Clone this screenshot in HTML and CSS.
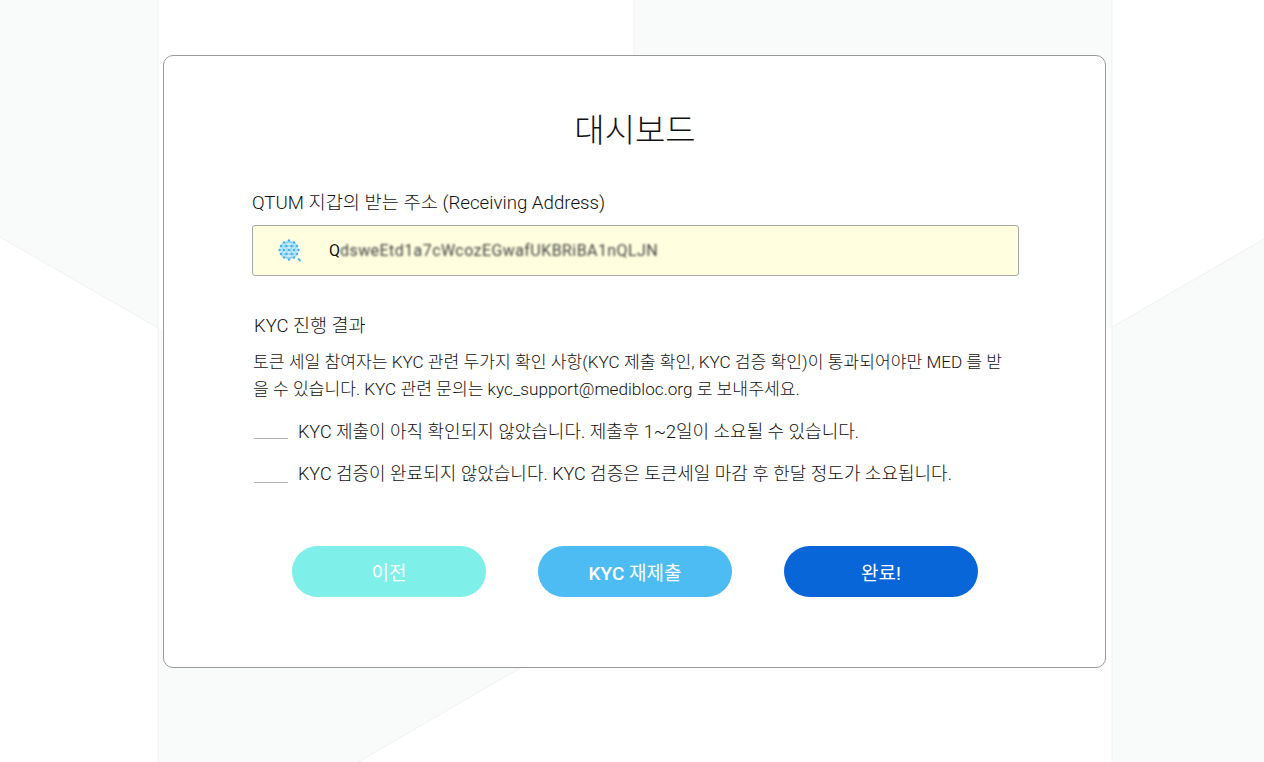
FILE: index.html
```html
<!DOCTYPE html>
<html lang="ko">
<head>
<meta charset="utf-8">
<title>대시보드</title>
<link rel="stylesheet" href="styles.css">
</head>
<body>
<svg class="backdrop" width="1264" height="762" viewBox="0 0 1264 762" aria-hidden="true">
  <rect class="tile" x="0" y="0" width="158" height="328"/>
  <rect class="tile" x="634" y="0" width="478" height="328"/>
  <path class="tile" d="M158 328 L634 602 L358 762 L158 762 Z"/>
  <path class="tile" d="M1112 327 L1264 239 L1264 762 L1112 762 Z"/>
  <path class="white" d="M0 237 L158 328 L158 340 L0 340 Z"/>
  <path class="edge" d="M0 237 L158 328"/>
  <path class="edge" d="M1264 239 L1112 327"/>
  <path class="edge" d="M522 667 L358 762"/>
  <path class="edge" d="M158 0 V762"/>
  <path class="edge" d="M1112 0 V762"/>
  <path class="edge" d="M634 0 V55"/>
</svg>
<main class="card">
  <h1 class="title">대시보드</h1>
  <label class="field-label">QTUM 지갑의 받는 주소 (Receiving Address)</label>
  <div class="address">
    <svg class="globe" width="24" height="24" viewBox="0 0 24 24" aria-hidden="true">
      <circle class="globe-fill" cx="11" cy="11" r="10"/>
      <g class="globe-net">
        <path d="M3 7 H19 M1.500 11 H20.500 M3 15 H19 M6 3.500 H16 M6 18.500 H16"/>
        <path d="M6 3.500 L3 7 L6 11 L3 15 L6 18.500 M11 1 L6 7 L11 11 L6 15 L11 21 M11 1 L16 7 L11 11 L16 15 L11 21 M16 3.500 L19 7 L16 11 L19 15 L16 18.500"/>
      </g>
      <path class="globe-dots" d="M6 3.500h0M11 1.500h0M16 3.500h0M3 7h0M8.500 7h0M13.500 7h0M19 7h0M1.500 11h0M6 11h0M11 11h0M16 11h0M20.500 11h0M3 15h0M8.500 15h0M13.500 15h0M19 15h0M6 18.500h0M11 20.500h0M16 18.500h0"/>
      <path class="globe-tail" d="M20 19.500 L22.500 22"/>
    </svg>
    <span class="address-text">Q<span class="address-blur">dsweEtd1a7cWcozEGwafUKBRiBA1nQLJN</span></span>
  </div>
  <h2 class="section-title">KYC 진행 결과</h2>
  <p class="section-text">토큰 세일 참여자는 KYC 관련 두가지 확인 사항(KYC 제출 확인, KYC 검증 확인)이 통과되어야만 MED 를 받을 수 있습니다. KYC 관련 문의는 kyc_support@medibloc.org 로 보내주세요.</p>
  <ul class="status-list">
    <li class="status"><span class="status-mark"></span>KYC 제출이 아직 확인되지 않았습니다. 제출후 1~2일이 소요될 수 있습니다.</li>
    <li class="status"><span class="status-mark"></span>KYC 검증이 완료되지 않았습니다. KYC 검증은 토큰세일 마감 후 한달 정도가 소요됩니다.</li>
  </ul>
  <div class="actions">
    <button class="btn btn-prev">이전</button>
    <button class="btn btn-resubmit"><b class="btn-strong">KYC</b> 재제출</button>
    <button class="btn btn-done">완료!</button>
  </div>
</main>
</body>
</html>
```
FILE: styles.css
```css
* { box-sizing: border-box; }
html, body { margin: 0; height: 100%; }
body {
  position: relative;
  overflow: hidden;
  background: #fff;
  color: #111;
  font-family: Roboto, "Noto Sans CJK KR", sans-serif;
  font-weight: 300;
  padding: 55px 0 0 163px;
}
.backdrop { position: absolute; left: 0; top: 0; }
.tile { fill: #f9fafa; }
.white { fill: #fff; }
.edge { fill: none; stroke: #f0f1f1; stroke-width: 1; }
.card {
  position: relative;
  width: 943px;
  height: 613px;
  background: #fff;
  border: 1px solid #9a9a9a;
  border-radius: 10px;
  padding: 52px 87px 0 88px;
}
.title {
  margin: 0 0 36px;
  height: 46px;
  line-height: 46px;
  font-size: 33px;
  font-weight: 300;
  text-align: center;
}
.field-label {
  display: block;
  height: 27px;
  line-height: 27px;
  font-size: 18.700px;
  font-weight: 300;
  margin-bottom: 8px;
}
.address {
  display: flex;
  align-items: center;
  width: 767px;
  height: 51px;
  padding-left: 25px;
  background: #ffffe0;
  border: 1px solid #a8a8a8;
  border-radius: 3px;
}
.globe { flex: none; margin-right: 27px; }
.globe-fill { fill: #c9ebfa; }
.globe-net { fill: none; stroke: #7ccbf2; stroke-width: .8; }
.globe-dots { fill: none; stroke: #45b4ec; stroke-width: 2.400; stroke-linecap: round; }
.globe-tail { stroke: #45b4ec; stroke-width: 1.800; }
.address-text { font-size: 16px; font-weight: 400; color: #111; }
.address-blur { filter: blur(1.300px); display: inline-block; color: #444; letter-spacing: .43px; }
.section-title {
  margin: 37px 0 0 2px;
  height: 27px;
  line-height: 27px;
  font-size: 18.500px;
  font-weight: 300;
}
.section-text {
  margin: 9px 0 0 1px;
  width: 760px;
  font-size: 17.150px;
  line-height: 27px;
}
.status-list { list-style: none; margin: 3px 0 0 2px; padding: 0; }
.status {
  display: flex;
  align-items: flex-end;
  height: 42px;
  font-size: 18px;
  line-height: 30px;
  white-space: nowrap;
  padding-bottom: 1px;
}
.status-mark {
  flex: none;
  width: 34px;
  height: 1px;
  margin: 0 10px 6px 0;
  background: #b0b0b0;
}
.status:first-child .status-mark { margin-bottom: 8px; }
.actions {
  display: flex;
  gap: 52px;
  margin: 56px 0 0 40px;
}
.btn {
  width: 194px;
  height: 51px;
  border: 0;
  border-radius: 26px;
  color: #fff;
  font: inherit;
  font-size: 19px;
  font-weight: 400;
}
.btn-strong { font-weight: 500; }
.btn-prev { background: #7eefe9; }
.btn-resubmit { background: #4dbcf2; }
.btn-done { background: #0866d9; }
```
